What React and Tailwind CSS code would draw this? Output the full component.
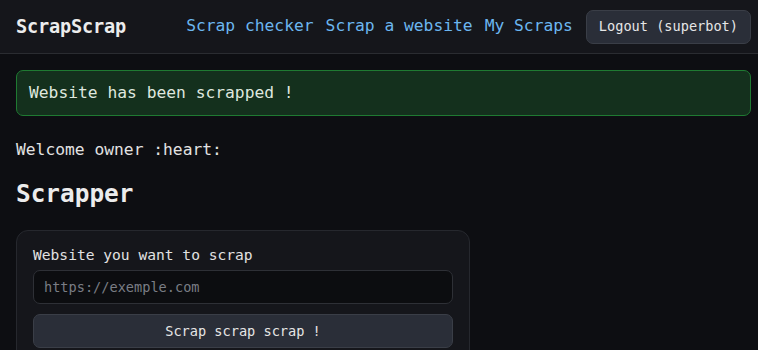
import React from "react";

export default function App() {
  return (
    <div
      className="min-h-[350px] bg-[#0d0e12] text-[#e6e6e6]"
      style={{ fontFamily: '"DejaVu Sans Mono", "Liberation Mono", monospace' }}
    >
      <nav className="h-[54px] bg-[#15161b] border-b border-[#2a2c31] flex items-center justify-between pl-4 pr-[7px]">
        <div className="text-[18.6px] font-bold text-[#ececec] tracking-[-0.2px]">ScrapScrap</div>
        <div className="flex items-center">
          <div className="flex items-center gap-[12px] text-[16.3px] text-[#6cb6f0]">
            <a>Scrap checker</a>
            <a>Scrap a website</a>
            <a>My Scraps</a>
          </div>
          <button className="ml-[13px] h-[34px] px-[12px] rounded-[7px] bg-[#2a2e38] border border-[#3a3e47] text-[13.6px] text-[#e6e6e6]">
            Logout (superbot)
          </button>
        </div>
      </nav>
      <main className="pl-4 pr-[7px] pt-4">
        <div className="h-[46px] rounded-[7px] border border-[#1f7a32] bg-[#14301d] flex items-center px-[12px] text-[16.3px] text-[#dfe7df]">
          Website has been scrapped !
        </div>
        <p className="mt-[22px] text-[16.3px] text-[#e2e2e2] leading-[24px]">Welcome owner :heart:</p>
        <h1 className="mt-[17px] text-[24.4px] font-bold text-[#ececec] leading-[30px]">Scrapper</h1>
        <div className="mt-[21px] w-[454px] rounded-[12px] border border-[#26282e] bg-[#15161b] px-4 pt-[14px] pb-4">
          <label className="block text-[14.6px] text-[#e2e2e2] leading-[20px]">Website you want to scrap</label>
          <input
            placeholder="https://exemple.com"
            className="mt-[5px] w-full h-[34px] rounded-[7px] border border-[#2e3036] bg-[#0c0d10] px-[10px] text-[13.6px] text-[#e6e6e6] placeholder-[#7a7d85] outline-none"
            style={{ fontFamily: '"DejaVu Sans Mono", "Liberation Mono", monospace' }}
          />
          <button className="mt-[10px] w-full h-[34px] rounded-[7px] border border-[#3a3e47] bg-[#2a2e38] text-[13.6px] text-[#e6e6e6]">
            Scrap scrap scrap !
          </button>
        </div>
      </main>
    </div>
  );
}
